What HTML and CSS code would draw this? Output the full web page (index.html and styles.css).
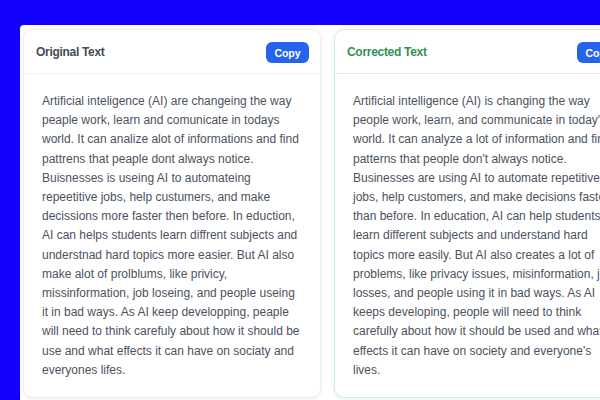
FILE: index.html
```html
<!DOCTYPE html>
<html lang="en">
<head>
<meta charset="utf-8">
<title>Text Correction</title>
<link rel="stylesheet" href="styles.css">
</head>
<body>
<div class="panel">
  <div class="cards">
    <section class="card">
      <header class="card-head">
        <h2 class="card-title">Original Text</h2>
        <button class="copy-btn">Copy</button>
      </header>
      <div class="card-body">
        <p>Artificial inteligence (AI) are changeing the way peaple work, learn and comunicate in todays world. It can analize alot of informations and find pattrens that peaple dont always notice. Buisnesses is useing AI to automateing repeetitive jobs, help custumers, and make decissions more faster then before. In eduction, AI can helps students learn diffrent subjects and understnad hard topics more easier. But AI also make alot of prolblums, like privicy, missinformation, job loseing, and people useing it in bad ways. As AI keep developping, peaple will need to think carefuly about how it should be use and what effects it can have on sociaty and everyones lifes.</p>
      </div>
    </section>
    <section class="card card-corrected">
      <header class="card-head">
        <h2 class="card-title">Corrected Text</h2>
        <button class="copy-btn">Copy</button>
      </header>
      <div class="card-body">
        <p>Artificial intelligence (AI) is changing the way people work, learn, and communicate in today's world. It can analyze a lot of information and find patterns that people don't always notice. Businesses are using AI to automate repetitive jobs, help customers, and make decisions faster than before. In education, AI can help students learn different subjects and understand hard topics more easily. But AI also creates a lot of problems, like privacy issues, misinformation, job losses, and people using it in bad ways. As AI keeps developing, people will need to think carefully about how it should be used and what effects it can have on society and everyone's lives.</p>
      </div>
    </section>
  </div>
</div>
</body>
</html>
```

FILE: styles.css
```css
* { box-sizing: border-box; }
html, body {
  margin: 0;
  height: 100%;
  overflow: hidden;
}
body {
  background: #1400ff;
  font-family: "Liberation Sans", Arial, sans-serif;
}
.panel {
  margin: 25px 0 0 20px;
  height: 375px;
  background: #ffffff;
  border-top-left-radius: 4px;
  padding: 4px 0 0 3px;
  overflow: hidden;
}
.cards {
  display: flex;
  gap: 13px;
}
.card {
  flex: 0 0 298px;
  width: 298px;
  border: 1px solid #eceef1;
  border-radius: 10px;
  background: #ffffff;
  box-shadow: 0 1px 4px rgba(15, 23, 42, 0.08);
}
.card-corrected {
  border-color: #c9f1d7;
}
.card-head {
  height: 44px;
  display: flex;
  align-items: center;
  justify-content: space-between;
  padding: 0 11px 0 12px;
  border-bottom: 1px solid #eef0f2;
}
.card-corrected .card-head {
  border-bottom-color: #d3f5df;
}
.card-title {
  margin: 0;
  font-size: 12px;
  font-weight: 700;
  letter-spacing: -0.3px;
  color: #444b57;
}
.card-corrected .card-title {
  color: #339155;
}
.copy-btn {
  font-family: inherit;
  font-size: 10.5px;
  font-weight: 700;
  color: #ffffff;
  background: #2563eb;
  border: none;
  border-radius: 6px;
  height: 21px;
  width: 43px;
  padding: 0;
  margin-top: 2px;
}
.card-body {
  padding: 18px 16px 17px 18px;
}
.card-body p {
  margin: 0;
  font-size: 12px;
  line-height: 19.2px;
  color: #4b5260;
}
```
